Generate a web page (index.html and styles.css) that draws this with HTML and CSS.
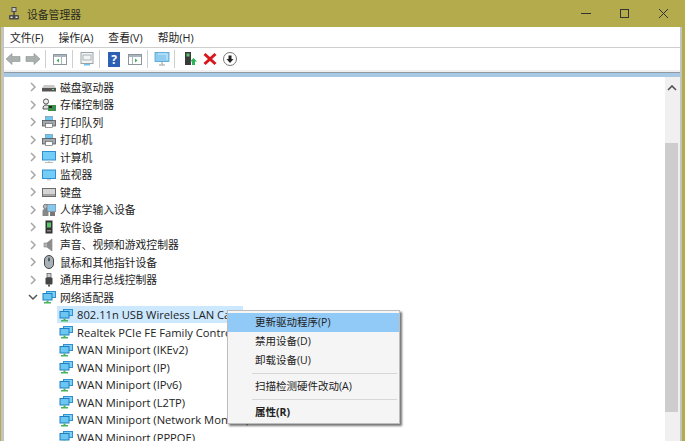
FILE: index.html
```html
<!DOCTYPE html>
<html lang="zh">
<head>
<meta charset="utf-8">
<title>设备管理器</title>
<link rel="stylesheet" href="styles.css">
</head>
<body>
<svg class="defs" width="0" height="0">
  <defs>
    <symbol id="net" viewBox="0 0 14 14">
      <rect x="4" y="1" width="10" height="7" fill="#2f8fd0"/>
      <rect x="5" y="2" width="8" height="5" fill="#7fd0f5"/>
      <rect x="0.5" y="3" width="10" height="7.5" fill="#1f7fc4"/>
      <rect x="1.5" y="4" width="8" height="5.5" fill="#6cc6f2"/>
      <rect x="4.5" y="10.5" width="2" height="1.5" fill="#47b35a"/>
      <rect x="2" y="12" width="7" height="1.5" fill="#47b35a"/>
    </symbol>
    <symbol id="chev-r" viewBox="0 0 8 10">
      <path d="M2 1l4 4-4 4" fill="none" stroke="#a6a6a6" stroke-width="1.5"/>
    </symbol>
    <symbol id="chev-d" viewBox="0 0 10 8">
      <path d="M1 2l4 4 4-4" fill="none" stroke="#555" stroke-width="1.5"/>
    </symbol>
    <symbol id="disk" viewBox="0 0 14 14">
      <path d="M2 5h10l2 3v3H0V8z" fill="#c9c9c9"/>
      <rect x="0" y="8" width="14" height="3.5" fill="#555"/>
      <rect x="10" y="9" width="2" height="1" fill="#7fd67f"/>
    </symbol>
    <symbol id="storage" viewBox="0 0 14 14">
      <circle cx="4" cy="3.5" r="2.6" fill="#eee" stroke="#555"/>
      <path d="M1 11c0-3 1-4 3-4s3 1 3 4z" fill="#ddd" stroke="#555"/>
      <rect x="6" y="7" width="8" height="6" fill="#3c8f4a"/>
      <rect x="7" y="8" width="3" height="2" fill="#222"/>
    </symbol>
    <symbol id="printer" viewBox="0 0 14 14">
      <rect x="3.5" y="1.500" width="7" height="4.500" fill="#6cc6f2" stroke="#6a8a9c" stroke-width=".6"/>
      <rect x="0.5" y="5.5" width="13" height="5.5" fill="#a0a8b0" stroke="#555" stroke-width=".8"/>
      <rect x="3.5" y="8.5" width="7" height="4" fill="#fff" stroke="#555" stroke-width=".6"/>
    </symbol>
    <symbol id="monitor" viewBox="0 0 14 14">
      <rect x="0" y="1" width="14" height="9.5" fill="#2f8fd0"/>
      <rect x="1" y="2" width="12" height="7.5" fill="#74cdf6"/>
      <rect x="3" y="12" width="8" height="1" fill="#b9b9b9"/>
      <rect x="6" y="10.5" width="2" height="1.5" fill="#d5d5d5"/>
    </symbol>
    <symbol id="screen" viewBox="0 0 14 14">
      <rect x="0" y="1.5" width="14" height="9.5" fill="#2f8fd0"/>
      <rect x="1" y="2.5" width="12" height="7.5" fill="#74cdf6"/>
      <rect x="5" y="11" width="4" height="1.5" fill="#c9d5dc"/>
    </symbol>
    <symbol id="keyboard" viewBox="0 0 14 14">
      <rect x="0" y="3" width="14" height="9" fill="#6b6b6b"/>
      <rect x="1" y="4" width="12" height="5.5" fill="#d5d5d5"/>
      <rect x="1" y="10" width="12" height="1" fill="#a8a8a8"/>
    </symbol>
    <symbol id="hid" viewBox="0 0 14 14">
      <circle cx="3.5" cy="3.5" r="2.2" fill="#bbb" stroke="#555" stroke-width=".7"/>
      <path d="M0.5 13V8c0-1.500 1-2 3-2s3 .5 3 2v5z" fill="#888"/>
      <rect x="5" y="1.500" width="9" height="7" fill="#86c9ec" stroke="#667" stroke-width=".6"/>
      <rect x="8" y="9" width="5" height="4" fill="#777"/>
    </symbol>
    <symbol id="software" viewBox="0 0 14 14">
      <rect x="3.500" y="0.500" width="7" height="13" fill="#333"/>
      <rect x="5" y="2.500" width="4" height="5" fill="#5cc26a"/>
      <rect x="5" y="10" width="4" height="1.500" fill="#888"/>
    </symbol>
    <symbol id="speaker" viewBox="0 0 14 14">
      <path d="M2 5h3l5-4v12l-5-4H2z" fill="#b5b5b5" stroke="#8a8a8a" stroke-width=".7"/>
      <path d="M5 5l5-4v12L5 9z" fill="#8d8d8d"/>
    </symbol>
    <symbol id="mouse" viewBox="0 0 14 14">
      <rect x="2.500" y="0.500" width="9" height="13" rx="4.500" fill="#a8b0b8" stroke="#444"/>
      <rect x="6" y="2.500" width="2" height="4" rx="1" fill="#4d5a66"/>
    </symbol>
    <symbol id="usb" viewBox="0 0 14 14">
      <rect x="5" y="0.500" width="4" height="4" fill="#ccc" stroke="#555" stroke-width=".7"/>
      <rect x="3.500" y="4.500" width="7" height="7" rx="1" fill="#444"/>
      <rect x="6" y="11.500" width="2" height="2" fill="#555"/>
    </symbol>
  </defs>
</svg>

<div class="window">
  <header class="titlebar">
    <svg class="app-icon" viewBox="0 0 12 13" width="12" height="13">
      <rect x="3.500" y="0" width="5" height="5" fill="#4a4a4a"/>
      <rect x="4.500" y="1" width="3" height="3" fill="#c9c9c9"/>
      <rect x="5.250" y="5" width="1.500" height="3" fill="#4a4a4a"/>
      <rect x="1" y="8" width="10" height="4.500" rx="1" fill="#4a4a4a"/>
      <rect x="2.500" y="9.500" width="2" height="1.500" fill="#e8e8e8"/>
      <rect x="7.500" y="9.500" width="2" height="1.500" fill="#e8e8e8"/>
    </svg>
    <span class="title-text">设备管理器</span>
    <div class="win-controls">
      <span class="win-btn"><svg width="11" height="11" viewBox="0 0 11 11"><rect x="1" y="5" width="10" height="1" fill="#333"/></svg></span>
      <span class="win-btn"><svg width="11" height="11" viewBox="0 0 11 11"><rect x="1.500" y="1.500" width="8" height="8" fill="none" stroke="#333"/></svg></span>
      <span class="win-btn"><svg width="11" height="11" viewBox="0 0 11 11"><path d="M1 1l9 9M10 1l-9 9" stroke="#333" fill="none"/></svg></span>
    </div>
  </header>

  <div class="body-wrap">
    <nav class="menubar">
      <span class="menu-item">文件(F)</span>
      <span class="menu-item">操作(A)</span>
      <span class="menu-item">查看(V)</span>
      <span class="menu-item">帮助(H)</span>
    </nav>

    <div class="toolbar">
      <svg class="tb" viewBox="0 0 16 16"><path d="M1 8l6-5.500V5.500h8v5H7v3z" fill="#a9b0ad" stroke="#8c9390" stroke-width=".6"/></svg>
      <svg class="tb" viewBox="0 0 16 16"><path d="M15 8L9 2.500V5.500H1v5h8v3z" fill="#a9b0ad" stroke="#8c9390" stroke-width=".6"/></svg>
      <span class="tb-sep"></span>
      <svg class="tb" viewBox="0 0 16 16"><rect x="1.500" y="3.500" width="13" height="10" fill="#fff" stroke="#8a959c"/><rect x="2" y="4" width="12" height="2" fill="#a9b6bf"/><rect x="9" y="6" width="1" height="7" fill="#a9b6bf"/><path d="M7 7.500v4L4.500 9.500z" fill="#3fae5a"/></svg>
      <span class="tb-sep"></span>
      <svg class="tb" viewBox="0 0 16 16"><rect x="2" y="1.500" width="12" height="11" fill="#f4f4f4" stroke="#9aa3a8"/><rect x="4" y="4" width="8" height="5" fill="none" stroke="#a8b2b8"/><rect x="5" y="13" width="6" height="1.500" fill="#6cc6f2"/></svg>
      <span class="tb-sep"></span>
      <span class="help-ico">?</span>
      <svg class="tb" viewBox="0 0 16 16"><rect x="1.500" y="3.500" width="13" height="10" fill="#fff" stroke="#8a959c"/><rect x="2" y="4" width="12" height="2" fill="#a9b6bf"/><rect x="5" y="6" width="1" height="7" fill="#a9b6bf"/><path d="M8 7.500v4l2.500-2z" fill="#3fae5a"/></svg>
      <span class="tb-sep"></span>
      <svg class="tb" viewBox="0 0 16 16"><rect x="1" y="1.500" width="14" height="9" fill="#8fcdf0" stroke="#4f9fd6" stroke-width=".8"/><path d="M4 3h9v6" fill="none" stroke="#e3f3fc" stroke-width=".8"/><path d="M8 10.500v3M5 14h6" stroke="#9a9a9a" stroke-width="1" fill="none"/></svg>
      <span class="tb-sep"></span>
      <svg class="tb tb-driver" viewBox="0 0 16 16"><rect x="3" y="1" width="6" height="13" fill="#3a3a3a"/><rect x="4.500" y="2.500" width="3" height="3" fill="#58c46c"/><path d="M11.500 7l3.500 3.500h-2V14h-3v-3.500H8z" fill="#2fb35a"/></svg>
      <svg class="tb" viewBox="0 0 16 16"><path d="M2.500 3l11 10M13.500 3l-11 10" stroke="#d8161b" stroke-width="3" fill="none"/></svg>
      <svg class="tb" viewBox="0 0 16 16"><circle cx="8" cy="8" r="6.500" fill="#fff" stroke="#777"/><path d="M8 12L4.500 8H6.500V4.500h3V8h2z" fill="#222"/></svg>
    </div>

    <div class="strip"></div>

    <div class="content">
      <div class="tree">
        <div class="row"><svg class="chev"><use href="#chev-r"/></svg><svg class="ico"><use href="#disk"/></svg><span>磁盘驱动器</span></div>
        <div class="row"><svg class="chev"><use href="#chev-r"/></svg><svg class="ico"><use href="#storage"/></svg><span>存储控制器</span></div>
        <div class="row"><svg class="chev"><use href="#chev-r"/></svg><svg class="ico"><use href="#printer"/></svg><span>打印队列</span></div>
        <div class="row"><svg class="chev"><use href="#chev-r"/></svg><svg class="ico"><use href="#printer"/></svg><span>打印机</span></div>
        <div class="row"><svg class="chev"><use href="#chev-r"/></svg><svg class="ico"><use href="#monitor"/></svg><span>计算机</span></div>
        <div class="row"><svg class="chev"><use href="#chev-r"/></svg><svg class="ico"><use href="#screen"/></svg><span>监视器</span></div>
        <div class="row"><svg class="chev"><use href="#chev-r"/></svg><svg class="ico"><use href="#keyboard"/></svg><span>键盘</span></div>
        <div class="row"><svg class="chev"><use href="#chev-r"/></svg><svg class="ico"><use href="#hid"/></svg><span>人体学输入设备</span></div>
        <div class="row"><svg class="chev"><use href="#chev-r"/></svg><svg class="ico"><use href="#software"/></svg><span>软件设备</span></div>
        <div class="row"><svg class="chev"><use href="#chev-r"/></svg><svg class="ico"><use href="#speaker"/></svg><span>声音、视频和游戏控制器</span></div>
        <div class="row"><svg class="chev"><use href="#chev-r"/></svg><svg class="ico"><use href="#mouse"/></svg><span>鼠标和其他指针设备</span></div>
        <div class="row"><svg class="chev"><use href="#chev-r"/></svg><svg class="ico"><use href="#usb"/></svg><span>通用串行总线控制器</span></div>
        <div class="row"><svg class="chev"><use href="#chev-d"/></svg><svg class="ico"><use href="#net"/></svg><span>网络适配器</span></div>
        <div class="row child selected"><svg class="ico"><use href="#net"/></svg><span>802.11n USB Wireless LAN Card</span></div>
        <div class="row child"><svg class="ico"><use href="#net"/></svg><span>Realtek PCIe FE Family Controller</span></div>
        <div class="row child"><svg class="ico"><use href="#net"/></svg><span>WAN Miniport (IKEv2)</span></div>
        <div class="row child"><svg class="ico"><use href="#net"/></svg><span>WAN Miniport (IP)</span></div>
        <div class="row child"><svg class="ico"><use href="#net"/></svg><span>WAN Miniport (IPv6)</span></div>
        <div class="row child"><svg class="ico"><use href="#net"/></svg><span>WAN Miniport (L2TP)</span></div>
        <div class="row child"><svg class="ico"><use href="#net"/></svg><span>WAN Miniport (Network Monitor)</span></div>
        <div class="row child"><svg class="ico"><use href="#net"/></svg><span>WAN Miniport (PPPOE)</span></div>
      </div>
      <div class="scrollbar">
        <svg class="sb-up" width="10" height="6" viewBox="0 0 10 6"><path d="M1 5l4-4 4 4" fill="none" stroke="#505050" stroke-width="1.600"/></svg>
        <div class="sb-thumb"></div>
      </div>
    </div>
  </div>
</div>

<div class="ctx-menu">
  <div class="ctx-item active">更新驱动程序(P)</div>
  <div class="ctx-item">禁用设备(D)</div>
  <div class="ctx-item">卸载设备(U)</div>
  <div class="ctx-sep"></div>
  <div class="ctx-item">扫描检测硬件改动(A)</div>
  <div class="ctx-sep"></div>
  <div class="ctx-item bold">属性(R)</div>
</div>
</body>
</html>
```
FILE: styles.css
```css
html, body {
  margin: 0;
  padding: 0;
  width: 685px;
  height: 441px;
  overflow: hidden;
  background: #fff;
}
body {
  position: relative;
  font-family: "Open Sans", "Noto Sans CJK SC", sans-serif;
  font-size: 10.800px;
  color: #222;
}
.defs { position: absolute; }

.window {
  height: 441px;
  display: flex;
  flex-direction: column;
  box-sizing: border-box;
  border-left: 1px solid #b3ab4c;
  border-right: 3px solid #b3ab4c;
}
.titlebar {
  height: 27px;
  flex: none;
  background: #b3ab4c;
  display: flex;
  align-items: center;
  padding-left: 7px;
  color: #2b2b20;
}
.app-icon { flex: none; }
.title-text { margin-left: 7px; }
.win-controls { margin-left: auto; margin-right: -1px; display: flex; }
.win-btn {
  width: 39px;
  height: 27px;
  display: flex;
  align-items: center;
  justify-content: center;
}
.body-wrap {
  flex: 1;
  min-height: 0;
  display: flex;
  flex-direction: column;
  background: #fff;
  border-left: 3px solid #c4c4c4;
  border-right: 2px solid #c4c4c4;
}
.menubar {
  height: 20px;
  flex: none;
  display: flex;
  align-items: center;
  padding-left: 6px;
  gap: 15px;
  border-bottom: 1px solid #cfcfcf;
}
.menu-item { white-space: nowrap; }

.toolbar {
  height: 22px;
  flex: none;
  display: flex;
  align-items: center;
  padding-left: 1px;
}
.tb { width: 16px; height: 16px; margin-right: 4px; flex: none; }
.tb-driver { margin-left: 1px; }
.tb-sep {
  width: 1px;
  height: 18px;
  background: #cfcfcf;
  margin: 0 6px 0 0;
  flex: none;
}
.help-ico {
  width: 12px;
  height: 15px;
  background: #2d5fb5;
  color: #fff;
  font-weight: 700;
  font-size: 12px;
  line-height: 15px;
  text-align: center;
  margin: 0 7px 0 2px;
  flex: none;
}
.strip {
  height: 7px;
  flex: none;
  box-sizing: border-box;
  background: #f0f0f0;
  border-bottom: 4px solid #a9c8e4;
  box-shadow: inset 0 -1px 0 #8f9aa5;
}
.content {
  flex: 1;
  min-height: 0;
  display: flex;
  overflow: hidden;
}
.tree {
  flex: 1;
  min-width: 0;
  padding: 1.250px 0 0 22px;
  overflow: hidden;
}
.row {
  height: 17.500px;
  display: flex;
  align-items: center;
  white-space: nowrap;
  line-height: 15px;
}
.chev { width: 10px; height: 10px; flex: none; margin: 0 4px 0 2px; }
.ico { width: 14px; height: 14px; flex: none; margin-right: 4px; }
.row.child { padding-left: 33px; font-size: 11.200px; }
.row.selected {
  width: 186px;
  box-sizing: border-box;
  margin-left: 31px;
  padding-left: 2px;
  height: 16.500px;
  margin-top: 0.500px;
  margin-bottom: 0.500px;
  background: #cce8ff;
}
.scrollbar {
  width: 15px;
  flex: none;
  background: #f0f0f0;
  display: flex;
  flex-direction: column;
  align-items: flex-start;
}
.sb-up { margin: 8px 0 0 2px; flex: none; }
.sb-thumb {
  width: 13px;
  height: 269px;
  margin-top: 52px;
  background: #cdcdcd;
  flex: none;
}

.ctx-menu {
  position: absolute;
  left: 227px;
  top: 310px;
  width: 171px;
  padding: 2px 0 1px;
  background: #f5f5f5;
  border: 1px solid #bdbdbd;
  box-shadow: 2px 2px 2px rgba(60, 60, 60, .7);
  font-size: 10.500px;
}
.ctx-item {
  height: 19px;
  line-height: 19px;
  padding-left: 27px;
  white-space: nowrap;
}
.ctx-item.active { background: #91c9f7; }
.ctx-item.bold { font-weight: 700; }
.ctx-sep {
  height: 1px;
  background: #d7d7d7;
  margin: 3px 2px 3px 24px;
}
```
